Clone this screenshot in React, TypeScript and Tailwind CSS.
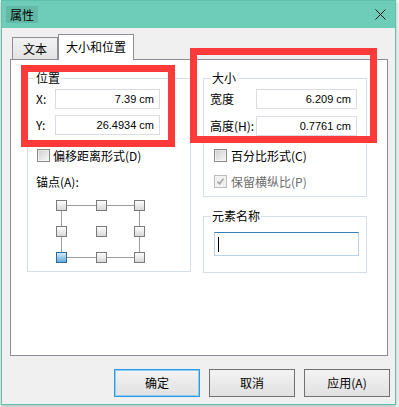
const cjk = "font-['Noto_Sans_CJK_SC','Noto_Sans',sans-serif]";

const Group = ({
  label,
  className,
  children,
}: {
  label: string;
  className: string;
  children?: React.ReactNode;
}) => (
  <div className={`relative border border-[#d5dfe5] ${className}`}>
    <span className="absolute left-[7px] -top-[9px] bg-white px-[1px] leading-[16px]">
      {label}
    </span>
    {children}
  </div>
);

const Field = ({ value, className }: { value: string; className: string }) => (
  <div
    className={`flex items-center justify-end border border-[#d9dde3] bg-white pr-[5px] font-['Liberation_Sans',sans-serif] text-[11px] text-black ${className}`}
  >
    {value}
  </div>
);

const Check = ({ disabled, checked }: { disabled?: boolean; checked?: boolean }) => (
  <span
    className={`flex h-[13px] w-[13px] items-center justify-center border ${
      disabled ? "border-[#bcbcbc] bg-[#f4f4f4]" : "border-[#8a8a8a] bg-gradient-to-b from-[#e4e4e4] to-[#f7f7f7]"
    }`}
  >
    <span
      className={`flex h-[9px] w-[9px] items-center justify-center ${
        disabled ? "bg-[#f0f0f0]" : "bg-gradient-to-br from-[#d2d2d2] to-[#f4f4f4]"
      }`}
    >
      {checked && (
        <svg width="9" height="9" viewBox="0 0 9 9">
          <path d="M1.5 4.5 L3.6 6.8 L7.5 1.8" fill="none" stroke="#a2a2a2" strokeWidth="1.4" />
        </svg>
      )}
    </span>
  </span>
);

const Anchor = () => {
  const xs = [0, 40, 78];
  const ys = [0, 26, 52];
  return (
    <svg width="90" height="64" viewBox="0 0 90 64">
      <defs>
        <linearGradient id="sq" x1="0" y1="0" x2="0" y2="1">
          <stop offset="0" stopColor="#ffffff" />
          <stop offset="1" stopColor="#d6d6d6" />
        </linearGradient>
        <linearGradient id="sel" x1="0" y1="0" x2="0" y2="1">
          <stop offset="0" stopColor="#d8ecfa" />
          <stop offset="1" stopColor="#5fa6da" />
        </linearGradient>
      </defs>
      <g stroke="#9b9b9b" strokeWidth="1">
        <line x1="11" y1="5.5" x2="40" y2="5.5" />
        <line x1="51" y1="5.5" x2="78" y2="5.5" />
        <line x1="11" y1="57.5" x2="40" y2="57.5" />
        <line x1="51" y1="57.5" x2="78" y2="57.5" />
        <line x1="5.5" y1="11" x2="5.5" y2="26" />
        <line x1="5.5" y1="37" x2="5.5" y2="52" />
        <line x1="83.5" y1="11" x2="83.5" y2="26" />
        <line x1="83.5" y1="37" x2="83.5" y2="52" />
      </g>
      {ys.map((y, r) =>
        xs.map((x, c) => {
          const on = r === 2 && c === 0;
          return (
            <rect
              key={`${r}-${c}`}
              x={x + 0.5}
              y={y + 0.5}
              width="10"
              height="10"
              fill={on ? "url(#sel)" : "url(#sq)"}
              stroke={on ? "#2f6b99" : "#7a7a7a"}
              strokeWidth="1"
            />
          );
        })
      )}
    </svg>
  );
};

const Button = ({ label, primary }: { label: string; primary?: boolean }) => (
  <button
    className={`h-[28px] w-[86px] border bg-gradient-to-b from-[#f3f3f3] to-[#e1e1e1] text-[12px] text-black ${
      primary ? "border-[#2f9ae3] shadow-[inset_0_0_0_1px_#8ccdf3]" : "border-[#707070]"
    }`}
  >
    {label}
  </button>
);

export default function App() {
  return (
    <div className={`relative h-[407px] w-[399px] bg-[#f5f5f5] text-[12px] text-black ${cjk}`}>
      <div className="ml-[1px] flex h-[405px] w-[395px] flex-col border border-[#5ec1a9] bg-[#f0f0f0] shadow-[0_2px_4px_rgba(0,0,0,0.25)]">
        <div className="flex h-[27px] items-center justify-between bg-[#6ecdb9]">
          <span className="ml-[4px] flex h-[17px] items-center bg-[#62b9a6] px-[4px] text-[12px] leading-[16px]">
            属性
          </span>
          <svg className="mr-[9px]" width="11" height="11" viewBox="0 0 11 11">
            <path d="M0.5 0.5 L10.5 10.5 M10.5 0.5 L0.5 10.5" stroke="#111" strokeWidth="1" />
          </svg>
        </div>

        <div className="mt-[6px] flex h-[26px] items-end pl-[10px]">
          <div className="flex h-[23px] w-[46px] items-center justify-center border border-b-0 border-[#8e8f99] bg-gradient-to-b from-[#f2f2f2] to-[#e2e2e2] leading-[16px]">
            文本
          </div>
          <div className="relative z-10 flex h-[26px] w-[76px] items-center justify-center border border-b-0 border-[#8e8f99] bg-white pb-[2px] leading-[16px]">
            大小和位置
          </div>
        </div>

        <div className="-mt-[1px] ml-[8px] flex h-[297px] w-[378px] gap-[12px] border border-[#8e8c99] bg-white pl-[16px] pt-[18px]">
          <Group label="位置" className="flex h-[194px] w-[164px] flex-col pt-[10px]">
            <div className="flex items-center pl-[8px]">
              <span className="w-[19px] leading-[16px]">X:</span>
              <Field value="7.39 cm" className="h-[20px] w-[105px]" />
            </div>
            <div className="mt-[6px] flex items-center pl-[8px]">
              <span className="w-[19px] leading-[16px]">Y:</span>
              <Field value="26.4934 cm" className="h-[20px] w-[105px]" />
            </div>
            <div className="mt-[14px] flex items-center gap-[3px] pl-[9px]">
              <Check />
              <span className="leading-[13px]">偏移距离形式(D)</span>
            </div>
            <div className="mt-[12px] pl-[8px] leading-[16px]">锚点(A):</div>
            <div className="mt-[10px] pl-[28px]">
              <Anchor />
            </div>
          </Group>

          <div className="flex flex-col gap-[19px]">
            <Group label="大小" className="flex h-[119px] w-[164px] flex-col pt-[10px]">
              <div className="flex items-center pl-[6px]">
                <span className="w-[46px] leading-[16px]">宽度</span>
                <Field value="6.209 cm" className="h-[20px] w-[101px]" />
              </div>
              <div className="mt-[7px] flex items-center pl-[6px]">
                <span className="w-[46px] leading-[16px]">高度(H):</span>
                <Field value="0.7761 cm" className="h-[20px] w-[101px]" />
              </div>
              <div className="mt-[13px] flex items-center gap-[4px] pl-[10px]">
                <Check />
                <span className="leading-[13px]">百分比形式(C)</span>
              </div>
              <div className="mt-[13px] flex items-center gap-[4px] pl-[10px]">
                <Check disabled checked />
                <span className="leading-[13px] text-[#6d6d6d]">保留横纵比(P)</span>
              </div>
            </Group>

            <Group label="元素名称" className="h-[57px] w-[164px] pl-[10px] pt-[15px]">
              <div className="flex h-[24px] w-[145px] items-center border border-[#b7d2ea] border-t-[#3c7fb1] bg-white pl-[3px]">
                <span className="h-[15px] w-[1px] bg-black" />
              </div>
            </Group>
          </div>
        </div>

        <div className="mt-[13px] flex justify-end gap-[9px] pr-[5px]">
          <Button label="确定" primary />
          <Button label="取消" />
          <Button label="应用(A)" />
        </div>
      </div>

      <div className="absolute left-[21px] top-[65px] h-[82px] w-[154px] border-[7px] border-[#fd3a3a]" />
      <div className="absolute left-[190px] top-[48px] h-[95px] w-[187px] border-[7px] border-[#fd3a3a]" />
    </div>
  );
}
